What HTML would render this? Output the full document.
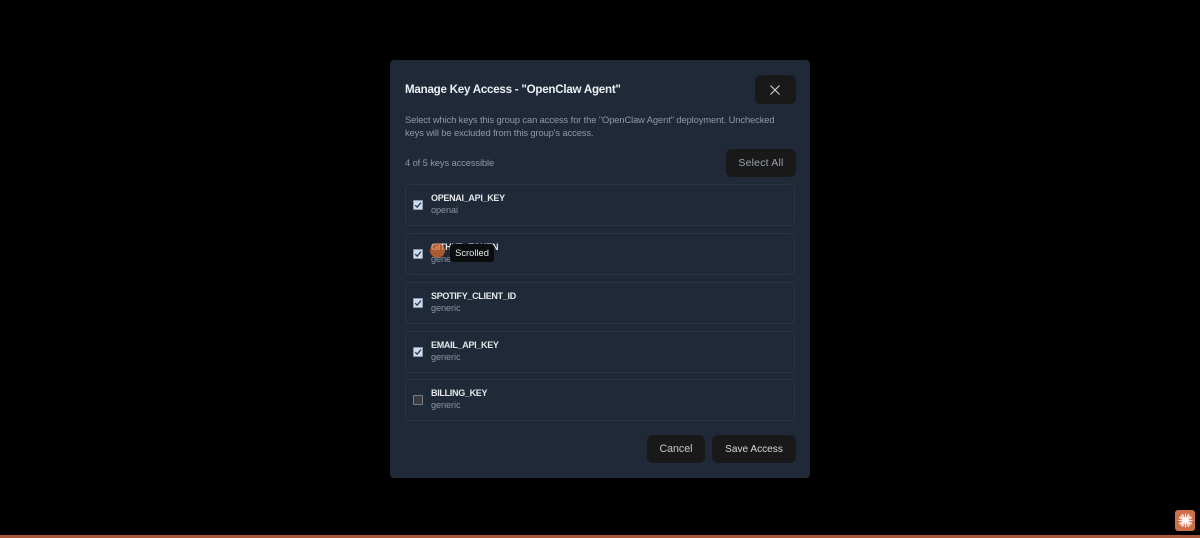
<!DOCTYPE html>
<html lang="en">
<head>
<meta charset="utf-8">
<title>Manage Key Access</title>
<style>
html,body{margin:0;padding:0;background:#000;width:1200px;height:538px;overflow:hidden}
body{position:relative;font-family:"Liberation Sans",sans-serif}
#wrap{position:absolute;left:0;top:0;width:1200px;height:538px;filter:blur(.35px)}
.t{position:absolute;white-space:nowrap}
#modal{position:absolute;left:390px;top:60px;width:420px;height:418px;background:#1f2937;border-radius:4px}
.btn{position:absolute;background:#191919;border-radius:6px;color:#d1d5db;text-align:center;white-space:nowrap}
.card{position:absolute;left:405px;width:388px;height:40px;border:1px solid #2a3644;border-radius:5px}
.cb{position:absolute;left:413px;width:8px;height:8px;border:1px solid #8d9aae;background:#cddcf2;border-radius:1px}
.cb svg{position:absolute;left:0;top:0}
.k{font-size:9px;color:#e5e7eb;left:431px;font-weight:700;letter-spacing:-.3px;line-height:12px}
.s{font-size:9.2px;color:#8b94a3;left:431px;letter-spacing:-.1px;line-height:12px}
.d{font-size:9.4px;color:#8f98a6;left:405px;letter-spacing:-.12px;line-height:12px}
</style>
</head>
<body>
<div id="wrap">
<div id="modal"></div>
<div class="t" style="left:405px;top:82px;font-size:11.6px;font-weight:700;color:#eceff3;line-height:15px;letter-spacing:-.25px">Manage Key Access - "OpenClaw Agent"</div>
<div class="btn" style="left:755px;top:75px;width:41px;height:29px"></div>
<svg style="position:absolute;left:769px;top:84px" width="12" height="12" viewBox="0 0 12 12"><path d="M1.5 1.5L10.5 10.5M10.5 1.5L1.5 10.5" stroke="#c9ced6" stroke-width="1.2" fill="none"/></svg>
<div class="t d" style="top:114px">Select which keys this group can access for the "OpenClaw Agent" deployment. Unchecked</div>
<div class="t d" style="top:127px">keys will be excluded from this group's access.</div>
<div class="t d" style="top:157px">4 of 5 keys accessible</div>
<div class="btn" style="left:726px;top:149px;width:70px;height:28px;line-height:28px;color:#9ca3af;font-size:10.5px;letter-spacing:.2px">Select All</div>

<div class="card" style="top:184px"></div>
<div class="cb" style="top:200px"><svg width="8" height="8" viewBox="0 0 8 8"><path d="M1.2 4.2L3.2 6.2L6.9 1.6" stroke="#27364a" stroke-width="1.3" fill="none"/></svg></div>
<div class="t k" style="top:192px">OPENAI_API_KEY</div>
<div class="t s" style="top:204px">openai</div>

<div class="card" style="top:233px"></div>
<div class="cb" style="top:249px"><svg width="8" height="8" viewBox="0 0 8 8"><path d="M1.2 4.2L3.2 6.2L6.9 1.6" stroke="#27364a" stroke-width="1.3" fill="none"/></svg></div>
<div class="t k" style="top:241px">GITHUB_TOKEN</div>
<div class="t s" style="top:253px">generic</div>
<div style="position:absolute;left:430px;top:243px;width:15px;height:15px;border-radius:50%;background:rgba(222,110,50,.72)"></div>
<div class="t" style="left:450px;top:244px;width:44px;height:18px;background:#0b0c0e;border-radius:3px;color:#e8eaed;font-size:9.4px;line-height:18px;text-align:center">Scrolled</div>

<div class="card" style="top:282px"></div>
<div class="cb" style="top:298px"><svg width="8" height="8" viewBox="0 0 8 8"><path d="M1.2 4.2L3.2 6.2L6.9 1.6" stroke="#27364a" stroke-width="1.3" fill="none"/></svg></div>
<div class="t k" style="top:290px">SPOTIFY_CLIENT_ID</div>
<div class="t s" style="top:302px">generic</div>

<div class="card" style="top:331px"></div>
<div class="cb" style="top:347px"><svg width="8" height="8" viewBox="0 0 8 8"><path d="M1.2 4.2L3.2 6.2L6.9 1.6" stroke="#27364a" stroke-width="1.3" fill="none"/></svg></div>
<div class="t k" style="top:339px">EMAIL_API_KEY</div>
<div class="t s" style="top:351px">generic</div>

<div class="card" style="top:379px"></div>
<div class="cb" style="top:395px;background:#3b3a40;border-color:#747c88"></div>
<div class="t k" style="top:387px">BILLING_KEY</div>
<div class="t s" style="top:399px">generic</div>

<div class="btn" style="left:647px;top:435px;width:58px;height:28px;line-height:29px;color:#c4c8ce;font-size:10.6px">Cancel</div>
<div class="btn" style="left:712px;top:435px;width:84px;height:28px;line-height:29px;color:#d5d8dc;font-size:10.1px">Save Access</div>

<div style="position:absolute;left:0;top:535px;width:1200px;height:3px;background:#a8553a"></div>
<div style="position:absolute;left:1175px;top:510px;width:20px;height:21px;background:#cf6f4a;border-radius:3px"></div>
<svg style="position:absolute;left:1178px;top:513px" width="15" height="15" viewBox="0 0 15 15"><g stroke="#fbeee6" stroke-width="1.3" stroke-linecap="round"><path d="M7.5 1V14M1 7.5H14M2.9 2.9L12.1 12.1M12.1 2.9L2.9 12.1M4.5 1.5L10.5 13.5M10.5 1.5L4.5 13.5M1.5 4.5L13.5 10.5M1.5 10.5L13.5 4.5"/></g><circle cx="7.5" cy="7.5" r="2.5" fill="#fff"/></svg>
</div>
</body>
</html>
